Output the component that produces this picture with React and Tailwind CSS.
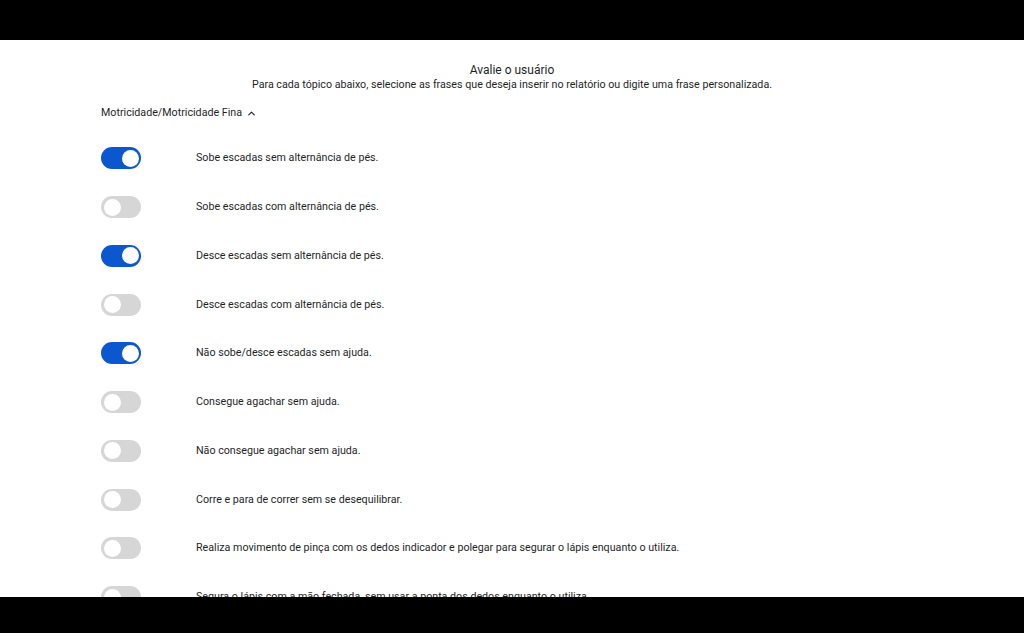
import { useState } from "react";

const items = [
  { label: "Sobe escadas sem alternância de pés.", on: true },
  { label: "Sobe escadas com alternância de pés.", on: false },
  { label: "Desce escadas sem alternância de pés.", on: true },
  { label: "Desce escadas com alternância de pés.", on: false },
  { label: "Não sobe/desce escadas sem ajuda.", on: true },
  { label: "Consegue agachar sem ajuda.", on: false },
  { label: "Não consegue agachar sem ajuda.", on: false },
  { label: "Corre e para de correr sem se desequilibrar.", on: false },
  {
    label:
      "Realiza movimento de pinça com os dedos indicador e polegar para segurar o lápis enquanto o utiliza.",
    on: false,
  },
  {
    label:
      "Segura o lápis com a mão fechada, sem usar a ponta dos dedos enquanto o utiliza.",
    on: false,
  },
];

const Toggle = ({ on, onClick }) => (
  <button
    onClick={onClick}
    className={`relative w-[40px] h-[22px] rounded-full shrink-0 transition-colors ${
      on ? "bg-[#0b57d0]" : "bg-[#d6d6d6]"
    }`}
  >
    <span
      className={`absolute top-[2.5px] w-[17px] h-[17px] rounded-full bg-white transition-all ${
        on ? "left-[20.5px]" : "left-[2.5px]"
      }`}
    />
  </button>
);

const App = () => {
  const [rows, setRows] = useState(items);

  const flip = (i) =>
    setRows((r) => r.map((row, j) => (j === i ? { ...row, on: !row.on } : row)));

  return (
    <div
      className="w-full h-screen flex flex-col bg-black text-[#1f1f1f]"
      style={{ fontFamily: "Roboto, 'Liberation Sans', sans-serif" }}
    >
      <div className="h-[40px] shrink-0 bg-black" />

      <main className="flex-1 bg-white overflow-hidden">
        {/* Header */}
        <div className="pt-[23px] text-center">
          <h1 className="text-[12px] leading-[15px]">Avalie o usuário</h1>
          <p className="text-[10.7px] leading-[13px]">
            Para cada tópico abaixo, selecione as frases que deseja inserir no relatório ou digite uma frase personalizada.
          </p>
        </div>

        {/* Section */}
        <div className="px-[101px] pt-[15px]">
          <button className="flex items-center gap-[4px] text-[10.7px] leading-[14px]">
            <span>Motricidade/Motricidade Fina</span>
            <svg width="11" height="11" viewBox="0 0 24 24" fill="none" stroke="currentColor" strokeWidth="2.5" strokeLinecap="round" strokeLinejoin="round">
              <path d="M6 15l6-6 6 6" />
            </svg>
          </button>

          <ul className="pt-[14px]">
            {rows.map((row, i) => (
              <li key={i} className="h-[48.75px] flex items-center">
                <Toggle on={row.on} onClick={() => flip(i)} />
                <span className="ml-[55px] text-[10.7px] leading-[14px]">{row.label}</span>
              </li>
            ))}
          </ul>
        </div>
      </main>

      <div className="h-[36px] shrink-0 bg-black" />
    </div>
  );
};

export default App;
